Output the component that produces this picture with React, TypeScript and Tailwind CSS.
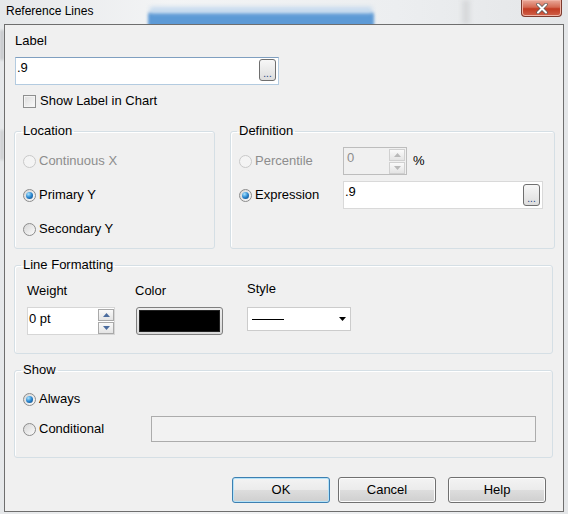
import React from "react";

type RadioProps = { label: string; checked?: boolean; disabled?: boolean };

function Radio({ label, checked, disabled }: RadioProps) {
  return (
    <label className={`flex items-center gap-[3px] ${disabled ? "text-[#8d8d8d]" : "text-black"}`}>
      <span
        className={`flex items-center justify-center w-[13px] h-[13px] rounded-full border ${
          disabled
            ? "border-[#c9c9c9] bg-[#f4f4f4]"
            : "border-[#8c8c8c] bg-[linear-gradient(135deg,#d6d6d6,#fbfbfb)]"
        }`}
      >
        {checked && (
          <span className="w-[7px] h-[7px] rounded-full bg-[radial-gradient(circle_at_35%_30%,#a8e4ff,#2a86cf_50%,#0b3f75)]" />
        )}
      </span>
      {label}
    </label>
  );
}

function DotsButton() {
  return (
    <span className="flex items-end justify-center w-[17px] h-[22px] rounded-[3px] border border-[#6f6f6f] bg-[linear-gradient(#f7f7f7,#dddddd)] text-[10px] leading-[13px] text-[#1b3d7a]">
      ...
    </span>
  );
}

function SpinButtons({ disabled }: { disabled?: boolean }) {
  const arrow = disabled ? "#b9b9b9" : "#4b6c9e";
  const border = disabled ? "border-[#d0d0d0]" : "border-[#a9a9a9]";
  return (
    <div className="flex flex-col gap-[1px] w-[16px]">
      <span className={`flex items-center justify-center h-[12px] border ${border} bg-[linear-gradient(#fafafa,#e4e4e4)]`}>
        <svg width="7" height="4" viewBox="0 0 7 4">
          <path d="M0 4 L3.5 0 L7 4 Z" fill={arrow} />
        </svg>
      </span>
      <span className={`flex items-center justify-center h-[12px] border ${border} bg-[linear-gradient(#fafafa,#e4e4e4)]`}>
        <svg width="7" height="4" viewBox="0 0 7 4">
          <path d="M0 0 L7 0 L3.5 4 Z" fill={arrow} />
        </svg>
      </span>
    </div>
  );
}

function GroupBox({
  title,
  className,
  children,
}: {
  title: string;
  className: string;
  children: React.ReactNode;
}) {
  return (
    <fieldset className={`border border-[#d5dfe5] rounded-[3px] shadow-[inset_1px_1px_0_#ffffff] ${className}`}>
      <legend className="ml-[6px] px-[2px] leading-[16px]">{title}</legend>
      {children}
    </fieldset>
  );
}

function DialogButton({ label, focused, className = "" }: { label: string; focused?: boolean; className?: string }) {
  return (
    <button
      className={`w-[98px] h-[26px] rounded-[3px] border bg-[linear-gradient(#f3f3f3_0%,#ebebeb_50%,#dddddd_51%,#cfcfcf_100%)] ${
        focused ? "border-[#3c7fb1] shadow-[inset_0_0_0_1px_#b4e2f8]" : "border-[#707070] shadow-[inset_0_0_0_1px_#fcfcfc]"
      } ${className}`}
    >
      {label}
    </button>
  );
}

export default function App() {
  return (
    <div className="relative w-[568px] h-[514px] overflow-hidden bg-[linear-gradient(90deg,#e6e8ea,#f3f4f5_30%,#eceef0_70%,#e4e6e8)] font-['Liberation_Sans',Arial,sans-serif] text-[13px] text-black">
      {/* blurred backdrop behind the glass frame */}
      <div className="absolute left-[148px] top-[12px] w-[226px] h-[16px] rounded-[3px] bg-[#5d9ad6] blur-[1.5px]" />
      <div className="absolute left-[150px] top-[7px] w-[222px] h-[6px] bg-[#c4d9ee] blur-[2px]" />
      <div className="absolute left-[462px] top-0 w-[8px] h-[24px] bg-[#d7d9db] blur-[2px]" />
      <div className="absolute left-0 top-[30px] w-[4px] h-[30px] bg-[#c9cbcd] blur-[1px]" />
      <div className="absolute left-0 top-[130px] w-[4px] h-[30px] bg-[#cfd1d3] blur-[1px]" />

      {/* title bar */}
      <div className="relative flex items-start justify-between h-[24px] pl-[6px] pr-[6px]">
        <span className="mt-[4px] text-[12px] leading-[14px] text-black">Reference Lines</span>
        <span className="flex items-center justify-center w-[41px] h-[17px] rounded-b-[4px] border border-t-0 border-[#7d3a2e] bg-[linear-gradient(#eaa99a,#d46a53_45%,#c23b22_55%,#d0614a)] shadow-[inset_0_0_0_1px_#f0b4a6]">
          <svg width="12" height="11" viewBox="0 0 12 11">
            <path d="M2 1.5 L10 9.5 M10 1.5 L2 9.5" stroke="#5a5a5a" strokeWidth="3.4" strokeLinecap="round" />
            <path d="M2 1.5 L10 9.5 M10 1.5 L2 9.5" stroke="#ffffff" strokeWidth="2" strokeLinecap="round" />
          </svg>
        </span>
      </div>

      {/* client area */}
      <div className="relative mx-[4px] h-[488px] border border-[#6e6e6e] bg-[#f0f0f0] flex flex-col pl-[9px]">
        <div className="mt-[8px] ml-[1px] leading-[16px]">Label</div>

        <div className="mt-[8px] ml-[1px] flex items-start justify-between w-[264px] h-[28px] bg-white border border-[#b3cbe0] border-t-[#7f9fc0] pl-[1px] pr-[2px] pt-[1px]">
          <span className="leading-[16px] mt-[1px]">.9</span>
          <DotsButton />
        </div>

        <label className="mt-[8px] ml-[9px] flex items-center gap-[4px] leading-[16px]">
          <span className="w-[13px] h-[13px] border border-[#8e8f8f] bg-[linear-gradient(135deg,#dcdcdc,#fafafa)] shadow-[inset_0_0_0_1px_#f4f4f4]" />
          Show Label in Chart
        </label>

        <div className="mt-[14px] flex gap-[15px]">
          <GroupBox title="Location" className="w-[201px] h-[126px]">
            <div className="pt-[5px] pl-[8px] flex flex-col">
              <div className="h-[34px] flex items-center">
                <Radio label="Continuous X" disabled />
              </div>
              <div className="h-[34px] flex items-center">
                <Radio label="Primary Y" checked />
              </div>
              <div className="h-[34px] flex items-center">
                <Radio label="Secondary Y" />
              </div>
            </div>
          </GroupBox>

          <GroupBox title="Definition" className="w-[325px] h-[126px]">
            <div className="pt-[5px] pl-[8px] flex flex-col">
              <div className="h-[34px] flex items-center">
                <div className="w-[104px]">
                  <Radio label="Percentile" disabled />
                </div>
                <div className="flex items-start justify-between w-[64px] h-[28px] border border-[#bdbdbd] bg-[#f0f0f0] pl-[3px] pr-[1px] pt-[1px]">
                  <span className="leading-[16px] mt-[1px] text-[#8d8d8d]">0</span>
                  <SpinButtons disabled />
                </div>
                <span className="ml-[6px] leading-[16px]">%</span>
              </div>
              <div className="h-[34px] flex items-center">
                <div className="w-[104px]">
                  <Radio label="Expression" checked />
                </div>
                <div className="flex items-start justify-between w-[200px] h-[28px] bg-white border border-[#d9d9d9] pl-[1px] pr-[2px] pt-[2px]">
                  <span className="leading-[16px]">.9</span>
                  <DotsButton />
                </div>
              </div>
            </div>
          </GroupBox>
        </div>

        <GroupBox title="Line Formatting" className="mt-[8px] w-[539px] h-[97px]">
          <div className="flex pl-[12px]">
            <div className="w-[109px] flex flex-col">
              <span className="mt-[10px] leading-[16px]">Weight</span>
              <div className="mt-[8px] flex items-start justify-between w-[88px] h-[28px] bg-white border border-[#d6d6d6] pl-[1px] pt-[1px]">
                <span className="leading-[16px] mt-[2px]">0 pt</span>
                <SpinButtons />
              </div>
            </div>
            <div className="w-[111px] flex flex-col">
              <span className="mt-[10px] -ml-[1px] leading-[16px]">Color</span>
              <div className="mt-[8px] w-[87px] h-[28px] rounded-[3px] border border-[#7f7f7f] p-[2px] bg-[linear-gradient(#ededed,#d9d9d9)]">
                <div className="w-full h-full bg-black border border-[#222222]" />
              </div>
            </div>
            <div className="flex flex-col">
              <span className="mt-[8px] leading-[16px]">Style</span>
              <div className="mt-[10px] flex items-center justify-between w-[104px] h-[24px] bg-white border border-[#cccccc] pl-[4px] pr-[4px]">
                <span className="w-[32px] h-[1px] bg-black" />
                <svg width="7" height="4" viewBox="0 0 7 4">
                  <path d="M0 0 L7 0 L3.5 4 Z" fill="#000000" />
                </svg>
              </div>
            </div>
          </div>
        </GroupBox>

        <GroupBox title="Show" className="mt-[8px] w-[539px] h-[96px]">
          <div className="pt-[6px] pl-[8px] flex flex-col">
            <div className="h-[30px] flex items-center">
              <Radio label="Always" checked />
            </div>
            <div className="h-[30px] flex items-center">
              <div className="w-[128px]">
                <Radio label="Conditional" />
              </div>
              <div className="w-[385px] h-[26px] border border-[#acacac] bg-[#f2f2f2]" />
            </div>
          </div>
        </GroupBox>

        <div className="mt-[19px] flex justify-end pr-[17px]">
          <DialogButton label="OK" focused className="mr-[8px]" />
          <DialogButton label="Cancel" className="mr-[12px]" />
          <DialogButton label="Help" />
        </div>
      </div>
    </div>
  );
}
